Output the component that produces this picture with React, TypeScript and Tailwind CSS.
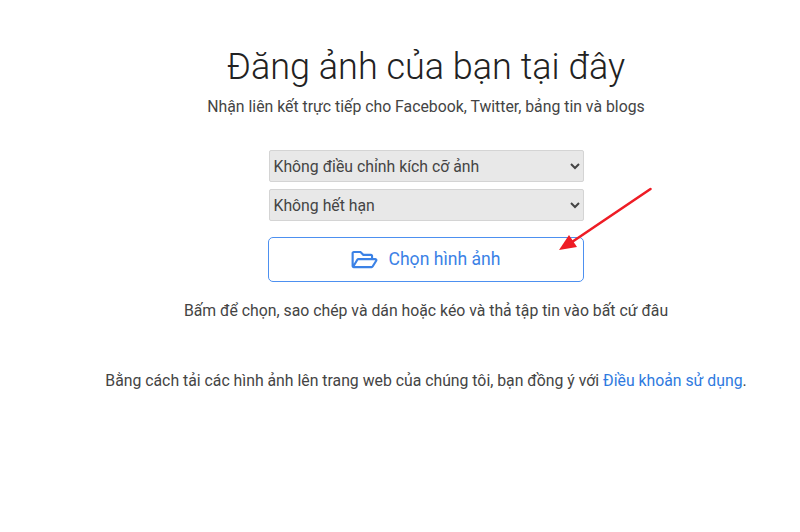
import { FaRegFolderOpen } from "react-icons/fa";

const selectClass =
  "block w-[315px] h-[32px] rounded-[2px] border border-[#d4d4d4] bg-[#e8e8e8] text-[15.8px] text-[#444444] outline-none";

export default function App() {
  return (
    <div className="relative min-h-[532px] bg-white pl-[52px] font-['Roboto',sans-serif]">
      <div className="flex flex-col items-center">
        <h1 className="mt-[40px] text-[36px] leading-[54px] font-light text-[#222222]">Đăng ảnh của bạn tại đây</h1>
        <p className="mt-[1px] text-[15.8px] leading-[24px] text-[#444444]">
          Nhận liên kết trực tiếp cho Facebook, Twitter, bảng tin và blogs
        </p>

        <div className="mt-[31px] flex flex-col gap-[7px]">
          <select className={selectClass} defaultValue="none">
            <option value="none">Không điều chỉnh kích cỡ ảnh</option>
            <option value="small">Ảnh nhỏ</option>
          </select>
          <select className={selectClass} defaultValue="never">
            <option value="never">Không hết hạn</option>
            <option value="day">1 ngày</option>
          </select>
        </div>

        <button className="mt-[16px] flex h-[45px] w-[316px] items-center justify-center gap-[10px] rounded-[5px] border border-[#4d90f0] bg-white text-[17.6px] text-[#3b82e6]">
          <FaRegFolderOpen className="h-[23px] w-[27px]" />
          <span>Chọn hình ảnh</span>
        </button>

        <p className="mt-[17px] text-[15.8px] leading-[24px] text-[#444444]">
          Bấm để chọn, sao chép và dán hoặc kéo và thả tập tin vào bất cứ đâu
        </p>
        <p className="mt-[46px] text-[15.8px] leading-[24px] text-[#444444]">
          Bằng cách tải các hình ảnh lên trang web của chúng tôi, bạn đồng ý với{" "}
          <a className="text-[#2f7ae0]">Điều khoản sử dụng</a>.
        </p>
      </div>

      {/* red arrow drawn on top of the screenshot */}
      <svg className="absolute left-[550px] top-[180px]" width="110" height="75" viewBox="0 0 110 75">
        <line x1="100.5" y1="9" x2="22" y2="62" stroke="#ee1c25" strokeWidth="2.6" strokeLinecap="round" />
        <polygon points="9,70 19,55 27,67" fill="#ee1c25" />
      </svg>
    </div>
  );
}
